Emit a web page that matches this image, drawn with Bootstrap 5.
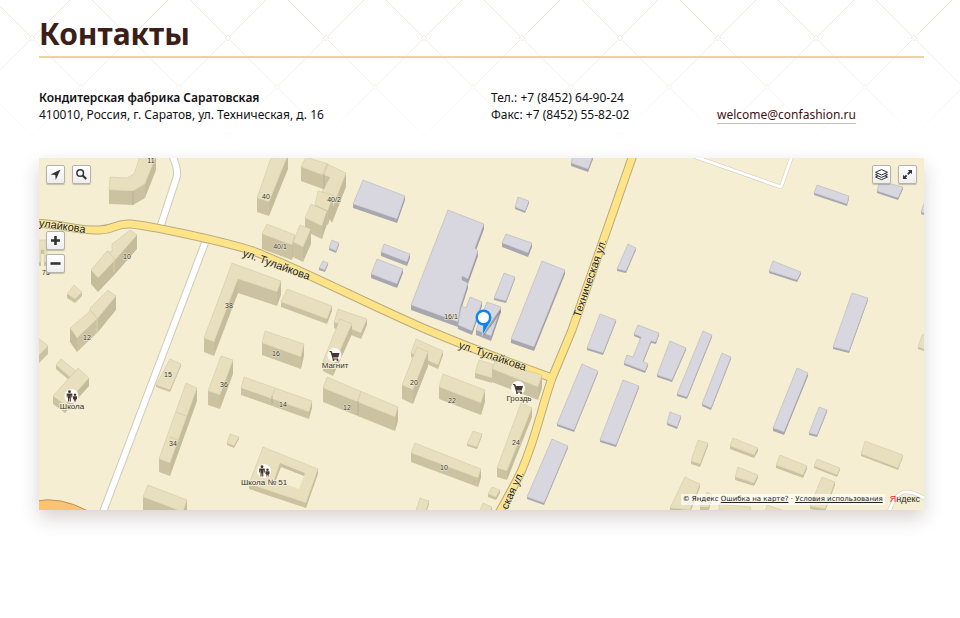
<!DOCTYPE html>
<html lang="ru">
<head>
<meta charset="utf-8">
<meta name="viewport" content="width=device-width, initial-scale=1">
<title>Контакты</title>
<link href="https://cdn.jsdelivr.net/npm/bootstrap@5.3.0/dist/css/bootstrap.min.css" rel="stylesheet">
<style>
body{font-family:"Noto Sans","Open Sans",sans-serif;font-size:12px;line-height:17px;color:#111;background:#fff}
.page-body{padding:12px 36px 40px 39px}
.lattice{position:absolute;top:0;left:0;width:100%;height:150px;z-index:-1;-webkit-mask-image:linear-gradient(#000,transparent);mask-image:linear-gradient(#000,transparent)}
.page-title{font-size:30px;line-height:44px;font-weight:700;color:#3a2018;border-bottom:2px solid #ecd3a0;margin-bottom:31px}
.firm-name{font-weight:600}
.contacts{--bs-gutter-x:19px;margin-bottom:35px}
.mail{color:#3f0f12;text-decoration:none;border-bottom:1px solid #c9bcbc}
.mail:hover{border-color:#3f0f12}
.city-map{background:#f6eed2;box-shadow:0 8px 18px rgba(60,30,25,.2)}
.map-tools{position:absolute;top:7px;gap:7px}
.map-tools.at-left{left:7px}
.map-tools.at-right{right:7px}
.map-zoom{position:absolute;top:73px;left:7px;gap:4px}
.map-btn{width:19px;height:19px;padding:0;border:1px solid #b5b2aa;border-radius:2px;background:linear-gradient(#fff,#eee);box-shadow:0 1px 1px rgba(0,0,0,.2);color:#333}
.map-btn svg{display:block;width:17px;height:17px}
.map-legal{position:absolute;right:4px;bottom:5px;gap:5px;font-family:"DejaVu Sans",sans-serif;font-size:7px;line-height:11px}
.legal-text{background:rgba(255,255,255,.65);padding:0 2px}
.legal-text a{color:#222}
.ya-logo{font-family:"Liberation Sans",Arial,sans-serif;font-size:9px;color:#222;text-decoration:none}
.ya-logo span{color:#e22}
.map-text{font-family:"Liberation Sans",Arial,sans-serif;paint-order:stroke;stroke-linejoin:round;fill:#333}
.house-no{font-size:7px;stroke:#f2ebd0;stroke-width:1px}
.poi-name{font-size:8px;stroke:#f6eed2;stroke-width:2px}
.street{font-size:11px;stroke:#fbf1c0;stroke-width:1px;fill:#222}
</style>
<script src="https://cdn.jsdelivr.net/npm/bootstrap@5.3.0/dist/js/bootstrap.bundle.min.js"></script>
</head>
<body>
<svg class="lattice" aria-hidden="true">
  <defs><pattern id="weave" x="-17" y="-11" width="98" height="98" patternUnits="userSpaceOnUse">
    <path d="M0 0L98 98M98 0L0 98" stroke="#ece6dc" fill="none"/>
    <path d="M49 46l3 3-3 3-3-3zM0-3l3 3-3 3M98-3l-3 3 3 3M0 95l3 3M98 95l-3 3" stroke="#ece6dc" fill="#fff"/>
  </pattern></defs>
  <rect width="100%" height="100%" fill="url(#weave)"/>
</svg>
<main class="page-body">
  <h1 class="page-title">Контакты</h1>
  <address class="row contacts align-items-end">
    <div class="col-6"><strong class="firm-name">Кондитерская фабрика Саратовская</strong><br>410010, Россия, г. Саратов, ул. Техническая, д. 16</div>
    <div class="col-3">Тел.: +7 (8452) 64-90-24<br>Факс: +7 (8452) 55-82-02</div>
    <div class="col-3"><a class="mail" href="mailto:welcome@confashion.ru">welcome@confashion.ru</a></div>
  </address>

  <section class="city-map position-relative" aria-label="Карта проезда">
    <svg class="d-block w-100" viewBox="39 158 885 352">
      <path d="M36 501Q60 496 88 511H36z" fill="#fdc373" stroke="#b9935a"/>
      <g fill="none" stroke-linejoin="round">
        <g stroke="#cfcabb">
          <path d="M172 155Q178 168 177 176L160 228M205 243L103 512" stroke-width="8"/>
          <path d="M690 155L781 187L792 156M889 512Q896 491 907 492Q914 492 926 499" stroke-width="4"/>
        </g>
        <g stroke="#fff">
          <path d="M172 155Q178 168 177 176L160 228M205 243L103 512" stroke-width="6"/>
          <path d="M690 155L781 187L792 156M889 512Q896 491 907 492Q914 492 926 499" stroke-width="3"/>
        </g>
        <g stroke="#b8ac80" stroke-width="9">
          <path d="M36 223C60 224 80 231 99 230S114 223 131 224C150 226 245 245 265 256C310 274 380 310 430 331Q480 352 552 378"/>
          <path d="M633 155L572 330L552 378C540 412 538 432 521 472Q512 490 499 513"/>
        </g>
        <g stroke="#fee487" stroke-width="7">
          <path d="M36 223C60 224 80 231 99 230S114 223 131 224C150 226 245 245 265 256C310 274 380 310 430 331Q480 352 552 378"/>
          <path d="M633 155L572 330L552 378C540 412 538 432 521 472Q512 490 499 513"/>
        </g>
      </g>
      <g id="houses"></g>
      <path d="M280 463L305 473L299 489L274 480z" fill="#f6eed2"/>
      <path d="M280 463L305 473L304 476L281 467L276 480L274 480z" fill="#c8bf9f"/>
      <g stroke="#d8cfac" fill="none">
        <path d="M176 412L186 416M170 437L180 441M275 389L272 396M361 391L358 401M328 164L324 174M107 251L114 258V272M91 311L97 318V332"/>
      </g>
      <g stroke="#b8af90" fill="none"><path d="M358 401V415M272 396V404M133 191V205M324 174V188"/></g>
      <g id="numbers" class="map-text house-no" text-anchor="middle"></g>
      <g class="map-text street">
        <text transform="translate(85 233) rotate(8)" text-anchor="end">улайкова</text>
        <text transform="translate(242 256) rotate(20)">ул. Тулайкова</text>
        <text transform="translate(458 348) rotate(19)">ул. Тулайкова</text>
        <text transform="translate(580 318) rotate(-71)">Техническая ул.</text>
        <text transform="translate(524 473) rotate(-66)" text-anchor="end">ская ул.</text>
      </g>
      <g fill="#fff" opacity=".9"><circle cx="71.500" cy="396" r="7"/><circle cx="334.500" cy="355" r="7"/><circle cx="518" cy="388" r="7"/><circle cx="264" cy="471" r="7"/></g>
      <defs>
        <g id="cart" fill="#4a352b"><path d="M-5-4h2l1 2h7l-1.300 4.500h-5l.3 1h4.500v1h-5.200l-2.300-7.500h-1z"/><circle cx="-1" cy="5" r="1"/><circle cx="3" cy="5" r="1"/></g>
        <g id="kids" fill="#4a352b"><circle cx="-2" cy="-4.300" r="1.400"/><path d="M-4.800-2.500h5.600v4h-1v-2h-.5v6h-1.100v-3h-.6v3h-1.100v-6h-.4v2h-.9z"/><circle cx="3.500" cy="-1.300" r="1.200"/><path d="M1.500.3h4v2.900h-.9v2.300h-.8v-1.500h-.6v1.500h-.8v-2.300h-.9z"/></g>
      </defs>
      <use href="#kids" x="71.500" y="396"/><use href="#cart" x="334.500" y="355"/><use href="#cart" x="518" y="388"/><use href="#kids" x="264" y="471"/>
      <g class="map-text poi-name" text-anchor="middle">
        <text x="72" y="409">Школа</text><text x="335" y="368">Магнит</text><text x="519" y="401">Гроздь</text><text x="264" y="485">Школа № 51</text>
      </g>
      <path d="M483 335L500 311L493 322z" stroke="#666" stroke-width="2" opacity=".5"/>
      <path d="M482.500 335.500L482.800 324L490.800 321Q488 326 482.500 335.500z" fill="#0a84f0" stroke="#fff" stroke-width=".5"/>
      <circle cx="483.500" cy="317.500" r="8" fill="#0a84f0"/><circle cx="483.500" cy="317.500" r="5.500" fill="#fff"/>
    </svg>

    <div class="map-tools at-left d-flex">
      <button class="map-btn" type="button" aria-label="Моё местоположение"><svg viewBox="0 0 17 17"><path d="M13.500 3.500L3.500 8.600l4.800.5.400 5z" fill="currentColor"/></svg></button>
      <button class="map-btn" type="button" aria-label="Поиск"><svg viewBox="0 0 17 17" fill="none" stroke="currentColor"><circle cx="7.200" cy="7" r="3.300" stroke-width="1.500"/><path d="M9.700 9.500l3.500 3.500" stroke-width="2.200"/></svg></button>
    </div>
    <div class="map-tools at-right d-flex">
      <button class="map-btn" type="button" aria-label="Слои"><svg viewBox="0 0 17 17" fill="#fff" stroke="currentColor"><path d="M2.500 11l6 2.700L14.500 11l-6-2.700z"/><path d="M2.500 8.700l6 2.700 6-2.700-6-2.700z"/><path d="M2.500 6.300l6 2.700 6-2.700-6-2.700z"/></svg></button>
      <button class="map-btn" type="button" aria-label="Развернуть"><svg viewBox="0 0 17 17"><path d="M13 4v4.200L11.600 6.800 9.500 8.900 8.100 7.500l2.100-2.100L8.800 4zM4 13V8.800l1.400 1.400L6.900 8.700l1.400 1.400-1.500 1.500L8.200 13z" fill="currentColor"/></svg></button>
    </div>
    <div class="map-zoom d-flex flex-column">
      <button class="map-btn" type="button" aria-label="Увеличить"><svg viewBox="0 0 17 17"><path d="M8.500 4v9M4 8.500h9" stroke="currentColor" stroke-width="2.600"/></svg></button>
      <button class="map-btn" type="button" aria-label="Уменьшить"><svg viewBox="0 0 17 17"><path d="M3.500 8.500h10" stroke="currentColor" stroke-width="2.600"/></svg></button>
    </div>
    <div class="map-legal d-flex align-items-center">
      <div class="legal-text">© Яндекс <a href="#">Ошибка на карте?</a> · <a href="#">Условия использования</a></div>
      <a class="ya-logo" href="#"><span>Я</span>ндекс</a>
    </div>
  </section>
</main>
<script>
// Each entry: roof outline, clockwise from its top corner, then wall height.
const dwellings = [
  ["110,177 127,178 134,174 140,156 156,156 145,184 133,191 109,190",14],
  ["37,240 47,240 47,262 44,262 44,250 41,250 41,262 37,262",4],
  ["107,251 112,252 112,244 130,230 137,235 116,259 98,278 91,270",14],
  ["74,285 82,292 75,299 67,294",4],
  ["89,312 91,307 108,290 116,296 98,318 77,338 70,328",14],
  ["36,336 48,346 36,358",8],
  ["61,359 76,371 70,377 56,365",4],
  ["78,368 89,378 65,405 53,396",8],
  ["272,155 288,155 269,202 257,198",14],
  ["306,157 328,164 323,175 301,167",14],
  ["327,164 346,173 332,209 322,192 330,177 322,175",14],
  ["318,191 333,195 328,211 315,205",14],
  ["311,204 327,211 322,226 305,218",13],
  ["267,224 295,235 292,245 262,234",15],
  ["300,225 311,229 303,247 293,242",15],
  ["232,263 281,281 277,292 238,279 214,342 204,338",14],
  ["287,289 332,306 327,319 281,302",5],
  ["170,359 181,364 170,390 156,385",2],
  ["221,356 233,360 220,395 208,391",14],
  ["186,383 197,388 170,463 159,459",13],
  ["148,485 187,500 183,512 143,497",14],
  ["230,434 239,437 234,446 227,443",2],
  ["244,377 312,401 309,412 241,388",7],
  ["265,331 304,344 301,357 262,343",12],
  ["338,309 367,319 361,333 334,322",6],
  ["340,319 352,324 333,366 323,361",10],
  ["327,377 398,407 395,417 323,388",14],
  ["263,447 318,469 306,503 249,484",5],
  ["416,339 443,351 438,365 411,353",4],
  ["417,347 428,352 413,390 402,385",14],
  ["443,374 485,390 481,403 439,387",12],
  ["479,360 495,365 492,378 475,373",5],
  ["495,361 542,375 538,387 492,369",13],
  ["521,403 532,408 507,471 497,468",9],
  ["473,431 482,434 477,447 467,444",2],
  ["415,443 481,469 478,478 411,453",9],
  ["492,487 500,490 496,497 488,494",3],
  ["420,498 429,501 425,513 416,510",3],
  ["483,503 492,507 489,514 479,512",3],
  ["698,440 708,443 700,464 691,461",3],
  ["733,438 758,448 754,455 730,446",3],
  ["738,467 758,475 754,483 735,477",3],
  ["685,477 700,484 690,510 670,508",3],
  ["707,492 712,495 709,507 700,507",3],
  ["719,504 751,507 750,514 719,510",2],
  ["767,505 785,511 784,514 765,512",2],
  ["865,441 903,455 898,468 861,454",2],
  ["780,455 807,466 803,475 776,465",3],
  ["817,459 840,468 837,475 814,466",2],
  ["822,477 835,482 825,509 810,506",3],
  ["922,335 927,333 927,350 918,347",2]
];
const works = [
  ["363,180 405,196 397,219 353,204",4],
  ["332,240 339,243 336,251 329,248",2],
  ["323,261 328,263 325,270 319,268",2],
  ["384,244 410,254 407,262 381,252",4],
  ["377,259 403,269 397,284 371,274",4],
  ["573,156 593,156 588,169 571,163",3],
  ["518,197 529,201 525,211 515,207",2],
  ["506,234 532,243 528,253 502,243",4],
  ["504,273 515,277 506,301 494,298",2],
  ["448,210 484,224 475,248 478,251 468,279 462,276 462,280 468,283 460,308 458,322 411,305",5],
  ["470,297 482,302 472,331 458,325 461,306 466,308",4],
  ["487,302 501,307 491,336 476,330",5],
  ["542,261 565,270 534,347 511,339",4],
  ["628,244 636,248 626,271 617,269",2],
  ["600,314 616,320 603,353 587,348",2],
  ["582,364 598,371 574,430 557,424",2],
  ["552,439 568,446 544,503 527,497",2],
  ["623,380 639,386 616,445 600,440",2],
  ["638,325 659,333 656,342 651,341 643,361 648,364 645,371 624,363 627,355 633,357 641,337 634,334",2],
  ["670,341 686,348 672,380 657,375",2],
  ["703,331 712,335 687,397 677,394",2],
  ["722,353 731,357 711,408 702,404",2],
  ["670,412 681,416 677,427 667,423",2],
  ["817,185 849,196 847,204 814,193",2],
  ["880,181 903,187 898,198 877,191",2],
  ["926,198 927,214 921,212",2],
  ["773,261 801,272 797,280 769,271",2],
  ["852,293 868,298 849,351 833,347",2],
  ["797,368 808,373 784,432 773,428",3],
  ["819,407 827,410 817,435 809,433",2]
];
function block([outline, h], roof, front, side) {
  const p = outline.split(" ").map(s => s.split(",").map(Number));
  let out = "";
  p.forEach(([x, y], i) => {
    const [u, v] = p[(i + 1) % p.length];
    if (u >= x) return;
    out += `<path d="M${x} ${y}L${u} ${v}v${h}L${x} ${y + h}z" fill="${Math.abs(v - y) > Math.abs(u - x) ? side : front}"/>`;
  });
  return out + `<polygon points="${outline}" fill="${roof}" stroke="${side}" stroke-width=".4"/>`;
}
document.getElementById("houses").innerHTML =
  dwellings.map(b => block(b, "#e7dfbd", "#cbc2a2", "#c5bc9c")).join("") +
  works.map(b => block(b, "#d8d7df", "#a8a7b0", "#9f9ea8")).join("");

const numbers = [["11",151,163],["40",266,199],["40/2",334,202],["40/1",280,249],["10",127,259],["75",46,275],["38",229,308],
  ["12",87,340],["16",276,356],["15",168,377],["36",224,387],["14",283,407],["12",347,410],["34",173,446],["20",414,385],
  ["22",452,403],["24",516,445],["10",444,470],["16/1",451,319]];
document.getElementById("numbers").innerHTML = numbers.map(([n, x, y]) => `<text x="${x}" y="${y}">${n}</text>`).join("");
</script>
</body>
</html>
